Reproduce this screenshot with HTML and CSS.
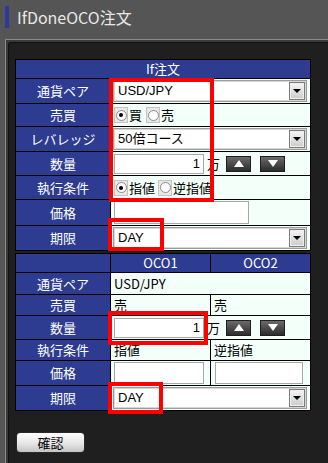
FILE: index.html
```html
<!DOCTYPE html>
<html lang="ja">
<head>
<meta charset="utf-8">
<title>IfDoneOCO注文</title>
<link rel="stylesheet" href="styles.css">
</head>
<body>
<div class="title-bar">
  <span class="accent"></span>
  <h1 class="title">IfDoneOCO注文</h1>
</div>
<div class="panel">
  <div class="panel-inner">
    <div class="form-area">
      <div class="grid grid-if">
        <div class="cell head span2">If注文</div>

        <div class="cell label">通貨ペア</div>
        <div class="cell value">
          <div class="select"><span class="select-text">USD/JPY</span><span class="drop"><span class="tri-down"></span></span></div>
        </div>

        <div class="cell label">売買</div>
        <div class="cell value">
          <span class="radio checked"><span class="circle"></span></span><span class="rtext">買</span>
          <span class="radio gap"><span class="circle"></span></span><span class="rtext">売</span>
        </div>

        <div class="cell label">レバレッジ</div>
        <div class="cell value">
          <div class="select"><span class="select-text">50倍コース</span><span class="drop"><span class="tri-down"></span></span></div>
        </div>

        <div class="cell label">数量</div>
        <div class="cell value">
          <span class="qty-input">1</span><span class="unit">万</span>
          <span class="step up"><span class="tri-up-w"></span></span>
          <span class="step down"><span class="tri-down-w"></span></span>
        </div>

        <div class="cell label">執行条件</div>
        <div class="cell value">
          <span class="radio checked"><span class="circle"></span></span><span class="rtext">指値</span>
          <span class="radio gap2"><span class="circle"></span></span><span class="rtext">逆指値</span>
        </div>

        <div class="cell label">価格</div>
        <div class="cell value">
          <span class="price-input"></span>
        </div>

        <div class="cell label">期限</div>
        <div class="cell value">
          <div class="select"><span class="select-text">DAY</span><span class="drop"><span class="tri-down"></span></span></div>
        </div>
      </div>

      <div class="grid grid-oco">
        <div class="cell head"></div>
        <div class="cell head">OCO1</div>
        <div class="cell head">OCO2</div>

        <div class="cell label">通貨ペア</div>
        <div class="cell value text span2">USD/JPY</div>

        <div class="cell label">売買</div>
        <div class="cell value text">売</div>
        <div class="cell value text">売</div>

        <div class="cell label">数量</div>
        <div class="cell value span2">
          <span class="qty-input">1</span><span class="unit">万</span>
          <span class="step up"><span class="tri-up-w"></span></span>
          <span class="step down"><span class="tri-down-w"></span></span>
        </div>

        <div class="cell label">執行条件</div>
        <div class="cell value text">指値</div>
        <div class="cell value text">逆指値</div>

        <div class="cell label">価格</div>
        <div class="cell value"><span class="oco-input one"></span></div>
        <div class="cell value"><span class="oco-input two"></span></div>

        <div class="cell label">期限</div>
        <div class="cell value span2">
          <div class="select"><span class="select-text">DAY</span><span class="drop"><span class="tri-down"></span></span></div>
        </div>
      </div>

      <span class="mark mark-main"></span>
      <span class="mark mark-day1"></span>
      <span class="mark mark-qty"></span>
      <span class="mark mark-day2"></span>
    </div>

    <button class="confirm" type="button">確認</button>
  </div>
</div>
</body>
</html>
```
FILE: styles.css
```css
html, body {
  margin: 0;
  padding: 0;
}
body {
  width: 328px;
  height: 463px;
  overflow: hidden;
  background: #555555;
  font-family: "Liberation Sans", "Noto Sans CJK JP", sans-serif;
  font-size: 13px;
  color: #000;
}

.title-bar {
  height: 39px;
  display: flex;
  align-items: flex-start;
}
.accent {
  display: block;
  width: 4px;
  height: 22px;
  margin: 6px 0 0 5px;
  background: #2b3a9c;
}
.title {
  margin: 6px 0 0 8px;
  font-family: "Noto Sans CJK JP", sans-serif;
  font-weight: normal;
  font-size: 16px;
  line-height: 22px;
  color: #e8e8e8;
}

.panel {
  margin-left: 5px;
  height: 424px;
  border-top: 1px solid #8a8a8a;
  border-left: 1px solid #8a8a8a;
  background: #3a3a3a;
  padding: 2px 0 0 2px;
}
.panel-inner {
  height: 100%;
  border-top: 1px solid #111;
  border-left: 1px solid #111;
  border-top-left-radius: 3px;
  background: #1f1f1f;
  padding: 16px 0 0 6px;
}

.form-area {
  position: relative;
  width: 296px;
}

.grid {
  display: grid;
  gap: 1px;
  background: #000;
  border: 1px solid #000;
  width: 294px;
}
.grid-if {
  grid-template-columns: 94px 199px;
  grid-template-rows: 18px 24px 22px 24px 23px 23px 25px 24px;
}
.grid-oco {
  margin-top: 2px;
  grid-template-columns: 94px 99px 99px;
  grid-template-rows: 18px 21px 20px 23px 20px 24px 24px;
}

.cell {
  display: flex;
  align-items: center;
  font-family: "Noto Sans CJK JP", sans-serif;
  line-height: 16px;
  white-space: nowrap;
}
.span2 {
  grid-column: span 2;
}
.head {
  background: #2d3c90;
  color: #fff;
  justify-content: center;
}
.grid-if .head {
  grid-column: span 2;
}
.label {
  background: #2d3c90;
  color: #fff;
  justify-content: center;
}
.value {
  background: #f3fff9;
  padding-left: 2px;
}
.value.text {
  padding-left: 3px;
}

.select {
  box-sizing: border-box;
  width: 194px;
  height: 22px;
  border: 1px solid #9c9c9c;
  box-shadow: inset 0 0 0 1px #d6d6d6;
  background: #fff;
  display: flex;
  align-items: center;
  padding: 0 1px 0 4px;
}
.select-text {
  flex: 1;
  font-family: "Liberation Sans", "Noto Sans CJK JP", sans-serif;
  font-size: 13px;
}
.drop {
  box-sizing: border-box;
  width: 16px;
  height: 18px;
  border: 1px solid #7c7c7c;
  box-shadow: inset 0 0 0 1px #eeeeee;
  background: linear-gradient(#f6f6f6, #cbcbcb);
  display: flex;
  align-items: center;
  justify-content: center;
}
.tri-down {
  width: 0;
  height: 0;
  border-left: 4px solid transparent;
  border-right: 4px solid transparent;
  border-top: 4px solid #000;
}

.radio {
  box-sizing: border-box;
  width: 14px;
  height: 16px;
  margin-left: 1px;
  background: #e8e8e8;
  border: 1px solid #c4c4c4;
  display: inline-flex;
  align-items: center;
  justify-content: center;
}
.radio.gap {
  margin-left: 4px;
}
.radio.gap2 {
  margin-left: 3px;
}
.circle {
  box-sizing: border-box;
  width: 11px;
  height: 11px;
  border-radius: 50%;
  border: 1px solid #8a8a8a;
  background: #fff;
  display: flex;
  align-items: center;
  justify-content: center;
}
.radio.checked .circle::after {
  content: "";
  width: 4px;
  height: 4px;
  border-radius: 50%;
  background: #000;
}
.rtext {
  margin-left: 1px;
}

.qty-input {
  box-sizing: border-box;
  width: 90px;
  height: 20px;
  margin-left: 1px;
  border: 1px solid #a8a8a8;
  background: #fff;
  text-align: right;
  padding-right: 3px;
  font-family: "Liberation Sans", sans-serif;
  line-height: 18px;
}
.unit {
  margin-left: 3px;
}
.step {
  box-sizing: border-box;
  width: 25px;
  height: 16px;
  border: 1px solid #1e1e1e;
  background: linear-gradient(#6a6a6a, #2c2c2c);
  display: inline-flex;
  align-items: center;
  justify-content: center;
}
.step.up {
  margin-left: 6px;
}
.step.down {
  margin-left: 9px;
}
.tri-up-w {
  width: 0;
  height: 0;
  border-left: 5px solid transparent;
  border-right: 5px solid transparent;
  border-bottom: 7px solid #fff;
}
.tri-down-w {
  width: 0;
  height: 0;
  border-left: 5px solid transparent;
  border-right: 5px solid transparent;
  border-top: 7px solid #fff;
}

.price-input {
  box-sizing: border-box;
  width: 135px;
  height: 23px;
  margin-left: 1px;
  border: 1px solid #a8a8a8;
  background: #fff;
}
.oco-input {
  box-sizing: border-box;
  height: 22px;
  border: 1px solid #a8a8a8;
  background: #fff;
}
.oco-input.one {
  width: 90px;
  margin-left: 1px;
}
.oco-input.two {
  width: 88px;
  margin-left: 2px;
}

.mark {
  position: absolute;
  box-sizing: border-box;
  border: 4px solid #ff0000;
}
.mark-main {
  left: 94px;
  top: 19px;
  width: 105px;
  height: 124px;
}
.mark-day1 {
  left: 93px;
  top: 159px;
  width: 56px;
  height: 33px;
}
.mark-qty {
  left: 93px;
  top: 252px;
  width: 100px;
  height: 34px;
}
.mark-day2 {
  left: 93px;
  top: 323px;
  width: 55px;
  height: 32px;
}

.confirm {
  display: block;
  box-sizing: border-box;
  width: 69px;
  height: 21px;
  margin: 21px 0 0 1px;
  padding: 0;
  border: 1px solid #2a2a2a;
  border-radius: 4px;
  background: linear-gradient(#ffffff, #e6e6e6 55%, #c4c4c4);
  font-family: "Noto Sans CJK JP", sans-serif;
  font-size: 13px;
  line-height: 19px;
  color: #000;
}
```
